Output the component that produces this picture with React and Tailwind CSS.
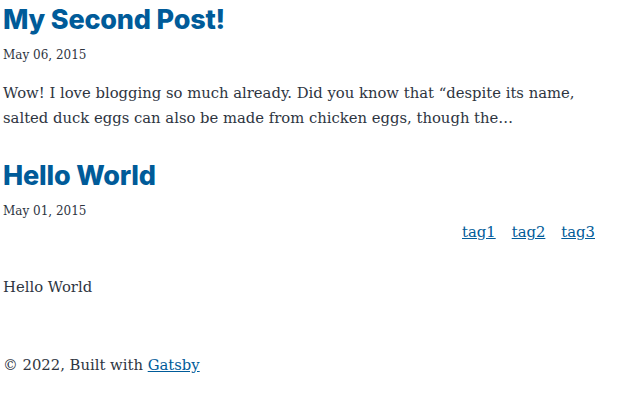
export default function App() {
  const posts = [
    {
      title: 'My Second Post!',
      date: 'May 06, 2015',
      excerpt:
        'Wow! I love blogging so much already. Did you know that \u201cdespite its name, salted duck eggs can also be made from chicken eggs, though the\u2026',
    },
  ];

  return (
    <div className="min-h-screen bg-white px-[3px] text-[#2e353f] [font-family:'DejaVu_Serif',serif]">
      {posts.map((post) => (
        <article key={post.title}>
          <h2 className="pt-[4px] text-[27px] leading-[32px] font-extrabold tracking-[-0.2px] text-[#005b99] [font-family:Inter,sans-serif]">
            {post.title}
          </h2>
          <p className="mt-[10px] text-[12px] leading-[18px]">{post.date}</p>
          <p className="mt-[16px] pr-[20px] text-[14.8px] leading-[25px]">{post.excerpt}</p>
        </article>
      ))}

      <article className="mt-[30px]">
        <h1 className="text-[27px] leading-[32px] font-extrabold tracking-[-0.2px] text-[#005b99] [font-family:Inter,sans-serif]">
          Hello World
        </h1>
        <p className="mt-[10px] text-[12px] leading-[18px]">May 01, 2015</p>
        <div className="flex justify-end gap-[16px] pr-[32px] text-[14.8px] leading-[24px]">
          <a href="#" className="text-[#005b99] underline">tag1</a>
          <a href="#" className="text-[#005b99] underline">tag2</a>
          <a href="#" className="text-[#005b99] underline">tag3</a>
        </div>
        <p className="mt-[30px] text-[14.8px] leading-[25px]">Hello World</p>
      </article>

      <footer className="mt-[53px] text-[14.8px] leading-[25px]">
        © 2022, Built with{' '}
        <a href="#" className="text-[#005b99] underline">Gatsby</a>
      </footer>
    </div>
  );
}
